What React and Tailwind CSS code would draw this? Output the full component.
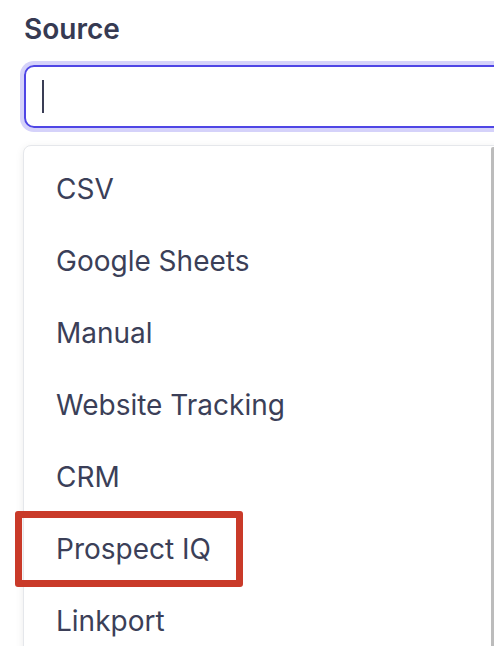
const options = ['CSV', 'Google Sheets', 'Manual', 'Website Tracking', 'CRM', 'Prospect IQ', 'Linkport']

export default function App() {
  return (
    <div className="relative w-[494px] h-[646px] overflow-hidden bg-white font-['Inter','Noto_Sans',sans-serif]">
      <div className="pl-[24px] pt-[12px]">
        {/* Label */}
        <label className="block text-[28px] leading-[34px] font-semibold text-[#363a52]">Source</label>

        {/* Focused input */}
        <div className="mt-[19px] w-[520px] h-[63px] rounded-[10px] border-2 border-[#4f46e5] ring-4 ring-[#d5d2fa] flex items-center pl-[16px]">
          <div className="w-[2px] h-[33px] bg-[#3a3d55]"></div>
        </div>

        {/* Options list */}
        <ul className="-ml-px mt-[17px] w-[520px] h-[560px] rounded-[8px] border border-[#e5e7eb] shadow-[0_2px_8px_rgba(0,0,0,0.08)] bg-white pt-[7px]">
          {options.map((o) => (
            <li key={o} className="h-[72px] flex items-center pl-[32px] text-[28px] text-[#3b3f58]">
              {o}
            </li>
          ))}
        </ul>
      </div>

      {/* Scrollbar thumb */}
      <div className="absolute left-[491px] top-[147px] w-[4px] h-[520px] rounded-tl-[2px] bg-[#bcbcbc]"></div>

      {/* Highlight annotation */}
      <div className="absolute left-[15px] top-[511px] w-[228px] h-[76px] rounded-[3px] border-[7px] border-[#c93a29]"></div>
    </div>
  )
}
